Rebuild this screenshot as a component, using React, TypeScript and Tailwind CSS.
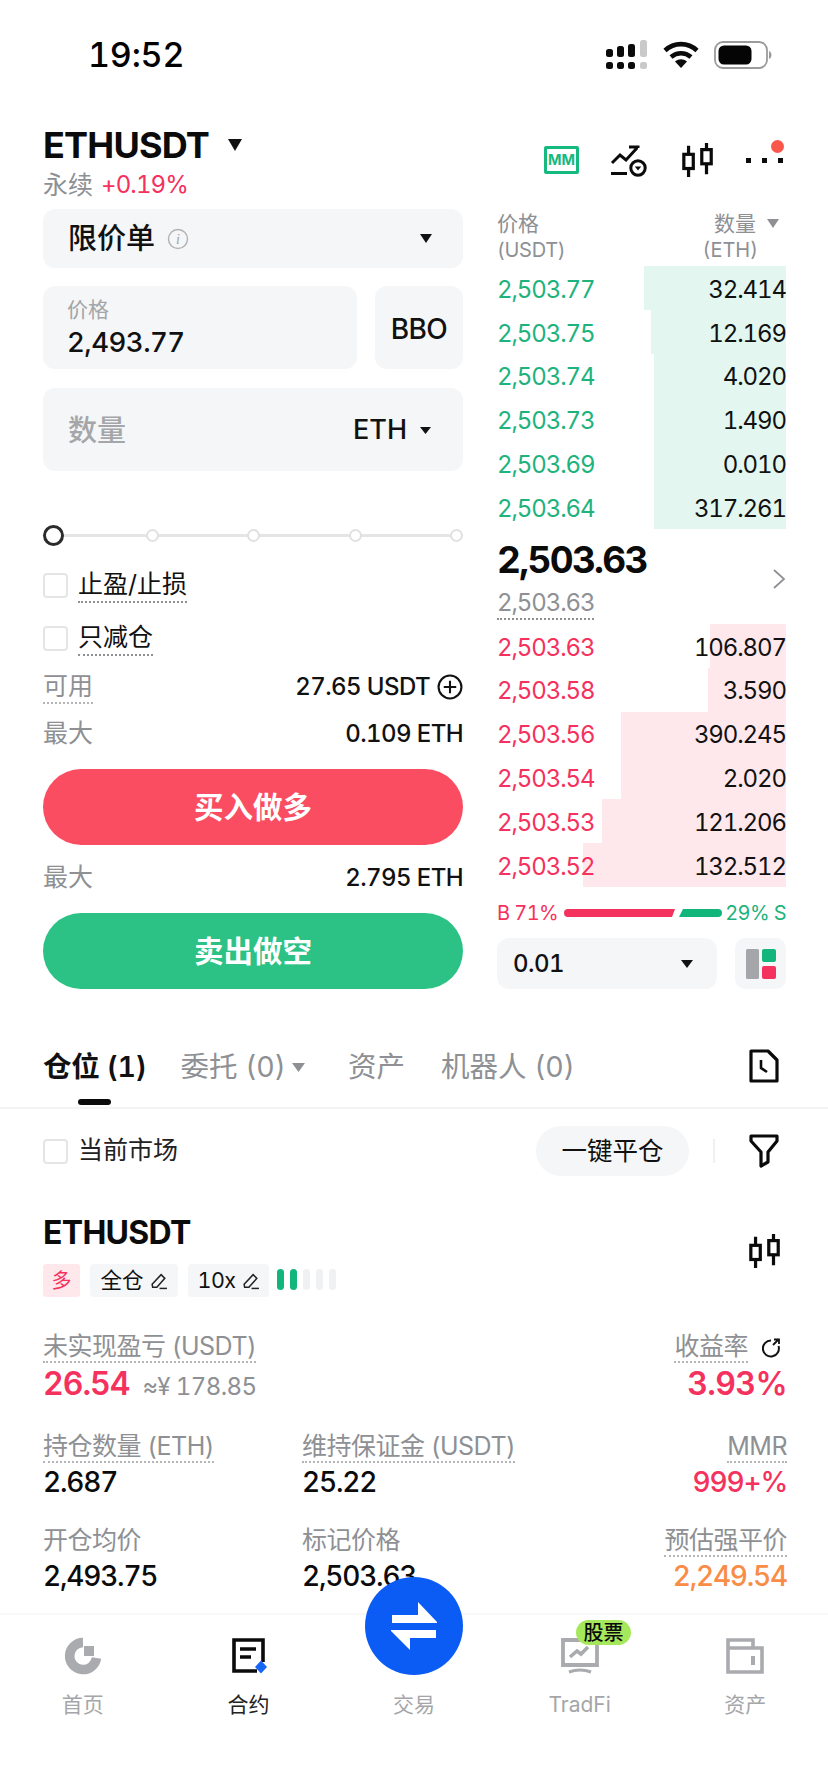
import React from "react";

const asks: [string, string, number][] = [
  ["2,503.77", "32.414", 142],
  ["2,503.75", "12.169", 135],
  ["2,503.74", "4.020", 132],
  ["2,503.73", "1.490", 132],
  ["2,503.69", "0.010", 132],
  ["2,503.64", "317.261", 132],
];
const bids: [string, string, number][] = [
  ["2,503.63", "106.807", 76],
  ["2,503.58", "3.590", 78],
  ["2,503.56", "390.245", 165],
  ["2,503.54", "2.020", 165],
  ["2,503.53", "121.206", 184],
  ["2,503.52", "132.512", 203],
];

function Caret({ className = "", w = 14, h = 11, color = "#111" }: { className?: string; w?: number; h?: number; color?: string }) {
  return (
    <svg width={w} height={h} viewBox="0 0 14 11" preserveAspectRatio="none" className={className}>
      <path d="M0 0H14L7 11Z" fill={color} />
    </svg>
  );
}

function Candles({ size = 34 }: { size?: number }) {
  return (
    <svg width={size} height={size} viewBox="0 0 34 36" fill="none" stroke="#0b0b0b" strokeWidth="3.4">
      <rect x="2" y="12" width="10" height="15" />
      <path d="M7 3V12M7 27V36" />
      <rect x="21" y="7" width="10" height="15" />
      <path d="M26 0V7M26 22V33" />
    </svg>
  );
}

function Pencil() {
  return (
    <svg width="18" height="18" viewBox="0 0 17 17" fill="none" stroke="#222" strokeWidth="1.4">
      <path d="M2 11.5 10.5 2.5 14 6 6.5 14.5H2.5Z" />
      <path d="M9 15.5H16" />
    </svg>
  );
}

function Check() {
  return <span className="block w-[25px] h-[25px] rounded-[4px] border-2 border-[#e4e5e7] bg-white shrink-0" />;
}

function Label({ children, className = "" }: { children: React.ReactNode; className?: string }) {
  return (
    <span className={"inline-block h-[30px] leading-[27px] text-[25px] tracking-[-0.5px] text-[#8e9094] border-b-2 border-dotted border-[#b4b5b8] " + className}>
      {children}
    </span>
  );
}

function Stat({ label, value, right, valueClass = "text-[#0b0b0b]", dotted = true }: { label: string; value: string; right?: boolean; valueClass?: string; dotted?: boolean }) {
  return (
    <div className={right ? "flex flex-col items-end" : "flex flex-col items-start"}>
      {dotted ? <Label>{label}</Label> : <span className="h-[30px] leading-[27px] text-[25px] tracking-[-0.5px] text-[#8e9094]">{label}</span>}
      <span className={"h-[40px] leading-[38px] text-[28px] font-medium tracking-[-1.2px] " + valueClass}>{value}</span>
    </div>
  );
}

function BookRow({ price, qty, depth, kind }: { price: string; qty: string; depth: number; kind: "ask" | "bid" }) {
  return (
    <div className="relative h-[43.8px] pt-[3px] flex items-center justify-between text-[24px] tracking-[-1.1px]">
      <div
        className={"absolute right-0 top-0 bottom-0 " + (kind === "ask" ? "bg-[#e3f7f0]" : "bg-[#ffe8ec]")}
        style={{ width: depth }}
      />
      <span className={"relative " + (kind === "ask" ? "text-[#1eb27d]" : "text-[#f5315e]")}>{price}</span>
      <span className="relative text-[#111]">{qty}</span>
    </div>
  );
}

function NavItem({ label, icon, active }: { label: string; icon: React.ReactNode; active?: boolean }) {
  return (
    <div className="w-[165.6px] flex flex-col items-center">
      <div className="h-[36px] mt-[23px] flex items-center justify-center">{icon}</div>
      <span className={"mt-[17px] leading-[28px] text-[21px] " + (active ? "text-[#222]" : "text-[#a4a6a9]")}>{label}</span>
    </div>
  );
}

export default function App() {
  return (
    <div className="relative w-[828px] h-[1792px] overflow-hidden bg-white flex flex-col tabular-nums font-['Inter','Noto_Sans_CJK_SC',sans-serif]">
      {/* status bar */}
      <div className="h-[110px] shrink-0 flex justify-between pt-[35px] pl-[88px] pr-[56px]">
        <span className="text-[34px] leading-[40px] font-medium tracking-[-0.2px] text-black">19:52</span>
        <div className="flex items-start gap-[15px] pt-[5px]">
          <svg width="42" height="30" viewBox="0 0 42 30">
            <rect x="0" y="9" width="7" height="8" rx="2.5" fill="#0b0b0b" />
            <rect x="11" y="6" width="7" height="11" rx="2.5" fill="#0b0b0b" />
            <rect x="22" y="4" width="7" height="13" rx="2.5" fill="#0b0b0b" />
            <rect x="34" y="0" width="7" height="17" rx="2.5" fill="#c9c9c9" />
            <rect x="0" y="22" width="7" height="7" rx="2.5" fill="#0b0b0b" />
            <rect x="11" y="22" width="7" height="7" rx="2.5" fill="#0b0b0b" />
            <rect x="22" y="22" width="7" height="7" rx="2.5" fill="#0b0b0b" />
            <rect x="34" y="22" width="7" height="7" rx="2.5" fill="#c9c9c9" />
          </svg>
          <svg width="36" height="28" viewBox="0 0 36 28" fill="none" stroke="#0b0b0b" strokeWidth="4.6" className="mt-[1px]">
            <path d="M2 9.5C11 1 25 1 34 9.5" />
            <path d="M8 16C14 11 22 11 28 16" />
            <path d="M12 20.5 18 27 24 20.5C20 17.6 16 17.6 12 20.5Z" fill="#0b0b0b" stroke="none" />
          </svg>
          <svg width="58" height="28" viewBox="0 0 58 28" className="mt-[1px]">
            <rect x="1" y="1" width="52" height="26" rx="8" fill="none" stroke="#9b9b9b" strokeWidth="1.8" />
            <rect x="4.5" y="4.5" width="33" height="19" rx="5.5" fill="#050505" />
            <path d="M55 10C57 11 57.5 12.5 57.5 14S57 17 55 18Z" fill="#9b9b9b" />
          </svg>
        </div>
      </div>

      {/* instrument header */}
      <div className="h-[99px] shrink-0 pl-[43px] pr-[45px] pt-[15px] flex justify-between">
        <div>
          <div className="flex items-center h-[40px]">
            <span className="text-[36px] font-bold tracking-[-0.8px] leading-[40px] text-[#0b0b0b]">ETHUSDT</span>
            <Caret className="ml-[19px]" w={14} h={12} />
          </div>
          <div className="flex items-center h-[30px] mt-[5px]">
            <span className="text-[25px] text-[#8e9094] leading-[30px]">永续</span>
            <span className="ml-[8px] text-[24px] text-[#f5315e] leading-[30px] tracking-[-0.9px]">+0.19%</span>
          </div>
        </div>
        <div className="flex items-start pt-[21px] relative">
          <span className="w-[35px] h-[28px] border-[3px] border-[#16b97e] rounded-[2px] flex items-center justify-center text-[14.5px] font-bold text-[#16b97e] leading-none">MM</span>
          <svg width="38" height="32" viewBox="0 0 38 32" fill="none" stroke="#0b0b0b" strokeWidth="3" className="ml-[31px] -mt-[1px]">
            <path d="M2 18 10 10 16 15 27 3M19 2H28V3" />
            <path d="M1 28.5H17" />
            <circle cx="28" cy="23" r="7.2" />
            <path d="M24.8 21.5H31.2L28 25.6Z" fill="#0b0b0b" stroke="none" />
          </svg>
          <div className="ml-[33px] -mt-[3px]">
            <Candles size={34} />
          </div>
          <div className="ml-[31px] mt-[12px] flex gap-[11px]">
            <span className="w-[5px] h-[5px] bg-[#0b0b0b]" />
            <span className="w-[5px] h-[5px] bg-[#0b0b0b]" />
            <span className="w-[5px] h-[5px] bg-[#0b0b0b]" />
          </div>
          <span className="absolute right-[-1px] top-[15px] w-[13px] h-[13px] rounded-full bg-[#f9574c]" />
        </div>
      </div>

      {/* trade columns */}
      <div className="flex pl-[43px] h-[780px] shrink-0">
        {/* order form */}
        <div className="w-[420px] shrink-0 flex flex-col">
          <div className="h-[59px] rounded-[12px] bg-[#f5f6f7] flex items-center pl-[25px] pr-[31px]">
            <span className="text-[29px] font-medium text-[#111]">限价单</span>
            <svg width="22" height="22" viewBox="0 0 22 22" fill="none" className="ml-[12px]">
              <circle cx="11" cy="11" r="9.5" stroke="#b0b2b5" strokeWidth="1.4" />
              <text x="11" y="16" textAnchor="middle" fontSize="14" fontStyle="italic" fontFamily="Liberation Serif" fill="#a0a2a5">i</text>
            </svg>
            <Caret className="ml-auto" w={12} h={9} />
          </div>
          <div className="flex gap-[18px] mt-[18px]">
            <div className="w-[314px] h-[83px] rounded-[12px] bg-[#f5f6f7] pl-[24px] pt-[10px] flex flex-col">
              <span className="text-[21px] leading-[28px] text-[#a4a6a9]">价格</span>
              <span className="text-[27.5px] leading-[36px] font-medium tracking-[-0.5px] text-[#111]">2,493.77</span>
            </div>
            <div className="w-[88px] h-[83px] pt-[2px] rounded-[12px] bg-[#f5f6f7] flex items-center justify-center text-[28px] font-medium tracking-[-0.6px] text-[#111]">BBO</div>
          </div>
          <div className="h-[83px] pt-[2px] mt-[19px] rounded-[12px] bg-[#f5f6f7] flex items-center pl-[25px] pr-[32px]">
            <span className="text-[29px] font-medium text-[#a4a6a9]">数量</span>
            <span className="ml-auto text-[27px] font-medium text-[#111]">ETH</span>
            <Caret className="ml-[13px]" w={11} h={7} />
          </div>
          {/* slider */}
          <div className="relative h-[21px] mt-[54px] flex items-center justify-between">
            <div className="absolute left-[10px] right-[2px] h-[3px] top-[9px] bg-[#e4e5e7]" />
            <span className="relative w-[21px] h-[21px] -mr-[7px] rounded-full border-[3.5px] border-[#2b2b2b] bg-white" />
            {[0, 1, 2, 3].map((i) => (
              <span key={i} className="relative w-[13px] h-[13px] rounded-full border-2 border-[#e0e1e3] bg-white" />
            ))}
          </div>
          <div className="h-[30px] mt-[24px] flex items-center">
            <Check />
            <span className="ml-[10px] text-[25px] leading-[29px] h-[33px] mt-[3px] border-b-2 border-dotted border-[#8e9094] text-[#111]">止盈/止损</span>
          </div>
          <div className="h-[30px] mt-[23px] flex items-center">
            <Check />
            <span className="ml-[10px] text-[25px] leading-[29px] h-[33px] mt-[3px] border-b-2 border-dotted border-[#8e9094] text-[#111]">只减仓</span>
          </div>
          <div className="h-[30px] mt-[19px] flex items-center justify-between">
            <span className="text-[25px] leading-[29px] h-[32px] mt-[2px] border-b-2 border-dotted border-[#b4b5b8] text-[#8e9094]">可用</span>
            <div className="flex items-center gap-[7px]">
              <span className="text-[24px] font-medium tracking-[-0.6px] text-[#111]">27.65 USDT</span>
              <svg width="26" height="26" viewBox="0 0 25 25" fill="none" stroke="#111" strokeWidth="2">
                <circle cx="12.5" cy="12.5" r="11" />
                <path d="M6.5 12.5H18.5M12.5 6.5V18.5" />
              </svg>
            </div>
          </div>
          <div className="h-[30px] mt-[17px] flex items-center justify-between">
            <span className="text-[25px] text-[#8e9094]">最大</span>
            <span className="text-[24px] font-medium tracking-[-0.6px] text-[#111]">0.109 ETH</span>
          </div>
          <div className="h-[76px] mt-[20px] rounded-full bg-[#fb4d62] flex items-center justify-center text-[29.5px] font-bold text-white">买入做多</div>
          <div className="h-[30px] mt-[18px] flex items-center justify-between">
            <span className="text-[25px] text-[#8e9094]">最大</span>
            <span className="text-[24px] font-medium tracking-[-0.6px] text-[#111]">2.795 ETH</span>
          </div>
          <div className="h-[76px] mt-[20px] rounded-full bg-[#2cc285] flex items-center justify-center text-[29.5px] font-bold text-white">卖出做空</div>
        </div>

        {/* order book */}
        <div className="w-[289px] ml-[34px] shrink-0 flex flex-col">
          <div className="h-[58px] pt-[1px] flex justify-between text-[20px] leading-[27px] text-[#8e9094]">
            <div className="flex flex-col">
              <span className="text-[21px]">价格</span>
              <span className="tracking-[-0.3px]">(USDT)</span>
            </div>
            <div className="flex flex-col items-end">
              <span className="flex items-center text-[21px]">
                数量
                <Caret className="ml-[11px] mr-[7px]" w={12} h={9} color="#8e9094" />
              </span>
              <span className="mr-[28px]">(ETH)</span>
            </div>
          </div>
          <div className="flex flex-col">
            {asks.map(([p, q, d]) => (
              <BookRow key={p} price={p} qty={q} depth={d} kind="ask" />
            ))}
          </div>
          <div className="h-[96px] pt-[4px] flex justify-between items-center">
            <div className="flex flex-col items-start">
              <span className="text-[37px] leading-[44px] font-bold tracking-[-1.7px] text-[#0b0b0b]">2,503.63</span>
              <span className="mt-[6px] text-[24px] leading-[29px] h-[32px] tracking-[-1.1px] border-b-2 border-dotted border-[#8e9094] text-[#8e9094]">2,503.63</span>
            </div>
            <svg width="14" height="22" viewBox="0 0 14 22" fill="none" stroke="#8e9094" strokeWidth="1.8">
              <path d="M2 2 12 11 2 20" />
            </svg>
          </div>
          <div className="flex flex-col">
            {bids.map(([p, q, d]) => (
              <BookRow key={p} price={p} qty={q} depth={d} kind="bid" />
            ))}
          </div>
          <div className="mt-[13px] h-[26px] flex items-center justify-between whitespace-nowrap text-[20px] tracking-[-0.6px]">
            <span className="text-[#f5315e]">B 71%</span>
            <svg width="158" height="8" viewBox="0 0 158 8" className="shrink-0 ml-[5px]">
              <path d="M4 0H111L108 8H4A4 4 0 0 1 4 0Z" fill="#f5315e" />
              <path d="M119 0H154A4 4 0 0 1 154 8H115Z" fill="#12b57b" />
            </svg>
            <span className="ml-[3px] text-[#1eb27d]">29% S</span>
          </div>
          <div className="mt-[12px] flex justify-between">
            <div className="w-[220px] h-[51px] rounded-[12px] bg-[#f5f6f7] flex items-center pl-[16px] pr-[24px]">
              <span className="text-[24px] font-medium tracking-[-0.5px] text-[#111]">0.01</span>
              <Caret className="ml-auto" w={12} h={8} />
            </div>
            <div className="w-[51px] h-[51px] rounded-[10px] bg-[#f5f6f7] flex items-center justify-center">
              <svg width="30" height="30" viewBox="0 0 30 30">
                <rect x="0" y="0" width="13" height="30" rx="1.5" fill="#a4a6a9" />
                <rect x="16" y="0" width="14" height="13" rx="2" fill="#12b57b" />
                <rect x="16" y="17" width="14" height="13" rx="2" fill="#f5315e" />
              </svg>
            </div>
          </div>
        </div>
      </div>

      {/* tabs */}
      <div className="h-[120px] shrink-0 border-b-2 border-[#f4f4f5] pl-[43px] pr-[49px] pt-[55px] flex items-start justify-between">
        <div className="flex items-start text-[28.5px] leading-[46px]">
          <div className="flex flex-col items-center">
            <span className="font-semibold tracking-[-0.3px] text-[#111]">仓位 (1)</span>
            <span className="mt-[9px] w-[33px] h-[6px] rounded-full bg-[#0b0b0b]" />
          </div>
          <div className="ml-[34px] flex items-center text-[#8e9094]">
            <span>委托 (0)</span>
            <Caret className="ml-[6px]" w={13} h={9} color="#8e9094" />
          </div>
          <span className="ml-[43px] text-[#8e9094]">资产</span>
          <span className="ml-[36px] text-[#8e9094]">机器人 (0)</span>
        </div>
        <svg width="30" height="34" viewBox="0 0 30 34" fill="none" stroke="#0b0b0b" strokeWidth="3.2" className="mt-[5px]">
          <path d="M2 2H19L28 11V32H2Z" strokeLinejoin="round" />
          <path d="M12 11V19L18 23" strokeWidth="2.6" />
        </svg>
      </div>

      {/* position filter */}
      <div className="h-[50px] mt-[17px] shrink-0 pl-[43px] pr-[49px] flex items-center">
        <Check />
        <span className="ml-[10px] text-[25px] text-[#222]">当前市场</span>
        <span className="ml-auto w-[153px] h-[50px] rounded-full bg-[#f5f6f7] flex items-center justify-center text-[25.5px] text-[#111]">一键平仓</span>
        <span className="ml-[24px] w-[2px] h-[24px] bg-[#f0f0f1]" />
        <svg width="30" height="34" viewBox="0 0 30 34" fill="none" stroke="#0b0b0b" strokeWidth="3.2" className="ml-[34px]">
          <path d="M2 2H28V7L19 18V28L12 32V18L2 7Z" strokeLinejoin="round" />
        </svg>
      </div>

      {/* position */}
      <div className="mt-[37px] shrink-0 pl-[43px] pr-[46px] flex justify-between">
        <div>
          <div className="h-[40px] leading-[40px] text-[32px] font-bold tracking-[-0.7px] text-[#0b0b0b]">ETHUSDT</div>
          <div className="mt-[11px] flex items-center gap-[10px] h-[33px]">
            <span className="w-[37px] h-[33px] rounded-[3px] bg-[#ffe8ec] flex items-center justify-center text-[20px] text-[#f5315e]">多</span>
            <span className="w-[88px] h-[33px] rounded-[4px] bg-[#f5f6f7] flex items-center justify-center gap-[6px] text-[21.5px] text-[#111]">
              全仓 <Pencil />
            </span>
            <span className="w-[81px] h-[33px] rounded-[4px] bg-[#f5f6f7] flex items-center justify-center gap-[6px] text-[21.5px] tracking-[-0.5px] text-[#111]">
              10x <Pencil />
            </span>
            <div className="flex gap-[6px] -mt-[2px] -ml-[2px]">
              <span className="w-[7px] h-[21px] rounded-full bg-[#12b57b]" />
              <span className="w-[7px] h-[21px] rounded-full bg-[#12b57b]" />
              <span className="w-[7px] h-[21px] rounded-full bg-[#f0f1f2]" />
              <span className="w-[7px] h-[21px] rounded-full bg-[#f0f1f2]" />
              <span className="w-[7px] h-[21px] rounded-full bg-[#f0f1f2]" />
            </div>
          </div>
        </div>
        <div className="mt-[21px]">
          <Candles size={34} />
        </div>
      </div>

      {/* stats */}
      <div className="mt-[36px] shrink-0 pl-[43px] pr-[41px] grid grid-cols-[259px_1fr_auto]">
        <div className="col-span-2 flex flex-col items-start">
          <Label>未实现盈亏 (USDT)</Label>
          <div className="h-[40px] pt-[1px] flex items-baseline">
            <span className="text-[32px] leading-[40px] font-semibold tracking-[-1px] text-[#f5315e]">26.54</span>
            <span className="ml-[13px] text-[24px] tracking-[-0.6px] text-[#8e9094]">≈¥ 178.85</span>
          </div>
        </div>
        <div className="flex flex-col items-end">
          <div className="flex items-start">
            <Label>收益率</Label>
            <svg width="20" height="20" viewBox="0 0 20 20" fill="none" stroke="#111" strokeWidth="2" className="ml-[14px] mr-[5px] mt-[5px]">
              <path d="M9 2.5A8 8 0 1 0 16.5 8" />
              <path d="M11 7 16 2M12 1.5H17V6" strokeWidth="1.8" />
            </svg>
          </div>
          <span className="h-[40px] pt-[1px] leading-[40px] text-[32px] font-semibold tracking-[-0.6px] text-[#f5315e]">3.93%</span>
        </div>

        <div className="mt-[30px]"><Stat label="持仓数量 (ETH)" value="2.687" /></div>
        <div className="mt-[30px]"><Stat label="维持保证金 (USDT)" value="25.22" /></div>
        <div className="mt-[30px]"><Stat label="MMR" value="999+%" right valueClass="text-[#f5315e]" /></div>

        <div className="mt-[24px]"><Stat label="开仓均价" value="2,493.75" dotted={false} /></div>
        <div className="mt-[24px]"><Stat label="标记价格" value="2,503.63" dotted={false} /></div>
        <div className="mt-[24px]"><Stat label="预估强平价" value="2,249.54" right valueClass="text-[#f98c47]" /></div>
      </div>

      {/* bottom nav */}
      <div className="mt-auto h-[179px] shrink-0 bg-white border-t-2 border-[#f8f8f8] flex">
        <NavItem
          label="首页"
          icon={
            <svg width="38" height="38" viewBox="0 0 38 38" fill="none">
              <path d="M19 5.5A13.5 13.5 0 1 0 32.5 21" stroke="#a9abae" strokeWidth="9.5" />
              <rect x="20" y="9" width="10" height="10" fill="#a9abae" />
            </svg>
          }
        />
        <NavItem
          label="合约"
          active
          icon={
            <svg width="36" height="36" viewBox="0 0 36 36" fill="none" className="ml-[4px]">
              <path d="M25 33H2V2H31V24" stroke="#0b0b0b" strokeWidth="3.6" />
              <path d="M8 11H24M8 19H19" stroke="#0b0b0b" strokeWidth="3.6" />
              <path d="M29 22.5 35 29 29 35.5 23 29Z" fill="#1566f6" />
            </svg>
          }
        />
        <NavItem label="交易" icon={<span className="block w-[36px] h-[36px]" />} />
        <NavItem
          label="TradFi"
          icon={
            <svg width="38" height="36" viewBox="0 0 38 36" fill="none">
              <path d="M36 4V27H2V2H20" stroke="#a9abae" strokeWidth="3.8" />
              <path d="M9 19 16 13 20 16 27 9" stroke="#a9abae" strokeWidth="3.6" />
              <path d="M8 34C15 31.5 23 31.5 30 34" stroke="#a9abae" strokeWidth="3" />
            </svg>
          }
        />
        <NavItem
          label="资产"
          icon={
            <svg width="38" height="36" viewBox="0 0 38 36" fill="none">
              <path d="M2 34V2H27V10M2 10H36V34H2Z" stroke="#a9abae" strokeWidth="3.6" />
              <path d="M27 18V27" stroke="#a9abae" strokeWidth="4" />
            </svg>
          }
        />
      </div>

      {/* floating trade button and badge */}
      <div className="absolute left-[365px] top-[1577px] w-[98px] h-[98px] rounded-full bg-[#0a5cf5] flex items-center justify-center">
        <svg width="48" height="50" viewBox="0 0 48 50">
          <path d="M2 14H28V1L47 21V22H2Z M46 29V37H20V49L1 30V29Z" fill="#fff" />
        </svg>
      </div>
      <span className="absolute left-[576px] top-[1620px] w-[55px] h-[25px] rounded-full bg-[#a6e85c] flex items-center justify-center text-[20px] font-medium leading-none text-[#0b0b0b]">股票</span>
    </div>
  );
}
